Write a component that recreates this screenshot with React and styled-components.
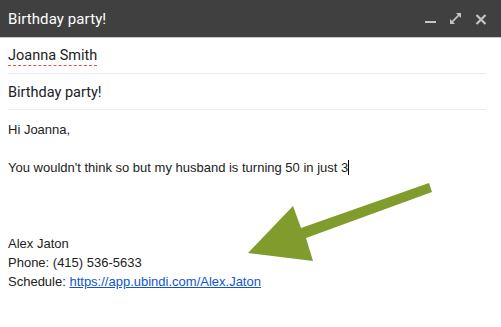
import React from "react";
import styled, { createGlobalStyle } from "styled-components";

const Global = createGlobalStyle`
  html, body { margin: 0; padding: 0; background: #fff; }
  #root { width: 501px; height: 327px; overflow: hidden; }
`;

const Window = styled.div`
  position: relative;
  width: 501px;
  height: 327px;
  background: #fff;
  display: flex;
  flex-direction: column;
`;

const Header = styled.div`
  height: 37px;
  flex: none;
  background: #404040;
  border-bottom: 1px solid #c8c8c8;
  display: flex;
  align-items: center;
  padding: 0 14px 0 8px;
  box-sizing: content-box;
`;

const Title = styled.div`
  flex: 1;
  color: #fff;
  font-family: Roboto, "Noto Sans", sans-serif;
  font-size: 15px;
  font-weight: 400;
  letter-spacing: 0.1px;
  padding-top: 1px;
`;

const Icons = styled.div`
  display: flex;
  align-items: center;
  gap: 13px;
  padding-top: 1px;
`;

const IconBtn = styled.svg`
  display: block;
  width: 12px;
  height: 12px;
`;

const Field = styled.div`
  margin: 0 15px 0 8px;
  height: 36px;
  border-bottom: 1px solid #ececec;
  display: flex;
  align-items: center;
  font-family: Roboto, "Noto Sans", sans-serif;
  font-size: 14.5px;
  color: #222;
  padding-top: 1px;
  box-sizing: border-box;
`;

const Recipient = styled.span`
  padding-bottom: 1px;
  border-bottom: 1px dashed #e8504a;
`;

const Body = styled.div`
  padding: 10px 8px 0 8px;
  font-family: "Liberation Sans", Arial, sans-serif;
  font-size: 13px;
  line-height: 19px;
  color: #222;
`;

const Line = styled.div`
  min-height: 19px;
  white-space: pre;
`;

const Caret = styled.span`
  display: inline-block;
  width: 1px;
  height: 15px;
  background: #000;
  vertical-align: -3px;
`;

const Link = styled.a`
  color: #1155cc;
  text-decoration: underline;
`;

const Arrow = styled.svg`
  position: absolute;
  left: 0;
  top: 0;
  pointer-events: none;
`;

export default function App() {
  return (
    <>
      <Global />
      <Window>
        <Header>
          <Title>Birthday party!</Title>
          <Icons>
            <IconBtn viewBox="0 0 12 12">
              <rect x="0" y="8" width="11" height="2" fill="#c4c4c4" />
            </IconBtn>
            <IconBtn viewBox="0 0 12 12">
              <g fill="#c4c4c4">
                <polygon points="6,0 11,0 11,5" />
                <polygon points="0,6 0,11 5,11" />
                <polygon points="8.2,1.6 9.4,2.8 2.8,9.4 1.6,8.2" />
              </g>
            </IconBtn>
            <IconBtn viewBox="0 0 12 12">
              <path d="M1.5 2 L10.5 11 M10.5 2 L1.5 11" stroke="#c4c4c4" strokeWidth="2.2" />
            </IconBtn>
          </Icons>
        </Header>
        <Field>
          <Recipient>Joanna Smith</Recipient>
        </Field>
        <Field>Birthday party!</Field>
        <Body>
          <Line>Hi Joanna,</Line>
          <Line> </Line>
          <Line>
            You wouldn't think so but my husband is turning 50 in just 3<Caret />
          </Line>
          <Line> </Line>
          <Line> </Line>
          <Line> </Line>
          <Line>Alex Jaton</Line>
          <Line>Phone: (415) 536-5633</Line>
          <Line>
            Schedule: <Link href="#">https://app.ubindi.com/Alex.Jaton</Link>
          </Line>
        </Body>
        <Arrow width="501" height="327" viewBox="0 0 501 327">
          <polygon
            fill="#7f9c2c"
            points="429,183 432,192 306,238 313,261 248,253 293,206 301,228"
          />
        </Arrow>
      </Window>
    </>
  );
}
